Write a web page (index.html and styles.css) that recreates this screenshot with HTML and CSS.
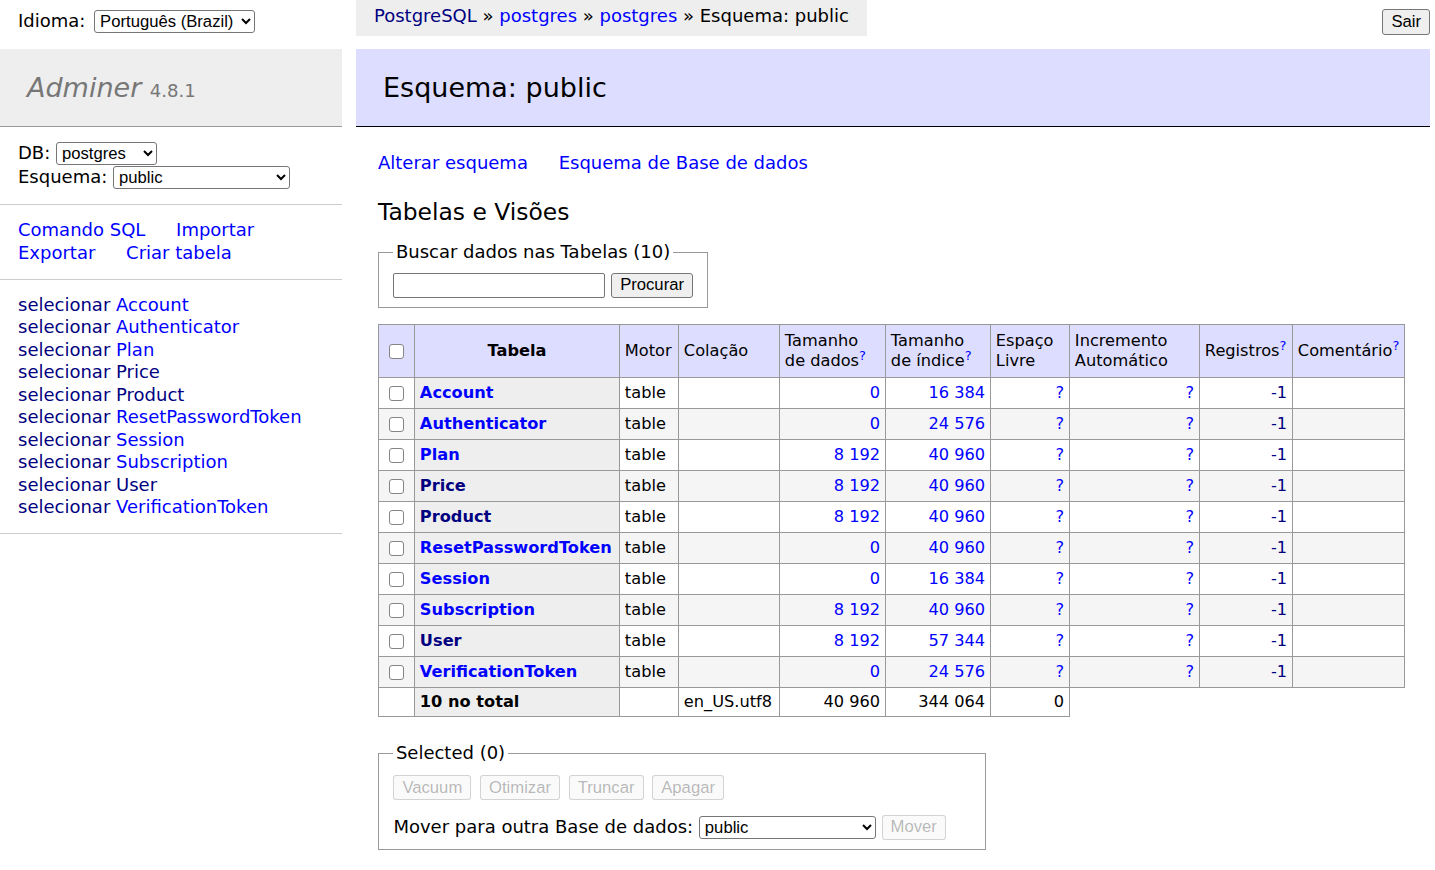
FILE: index.html
```html
<!DOCTYPE html>
<html lang="pt-BR">
<head>
<meta charset="utf-8">
<title>Esquema: public - Adminer</title>
<link rel="stylesheet" href="styles.css">
</head>
<body>
<div class="page">
  <header class="top">
    <form class="lang">Idioma: <select class="sel sel-lang"><option>Português (Brazil)</option></select></form>
    <nav class="breadcrumb"><a class="v" href="#">PostgreSQL</a> » <a href="#">postgres</a> » <a href="#">postgres</a> » Esquema: public</nav>
    <button class="btn logout" type="button">Sair</button>
  </header>
  <div class="main">
    <aside class="menu">
      <h1><a class="brand" href="#">Adminer</a> <span class="version">4.8.1</span></h1>
      <p class="dbs">DB: <select class="sel sel-db"><option>postgres</option></select><br>Esquema: <select class="sel sel-schema"><option>public</option></select></p>
      <p class="links side-links"><a href="#">Comando SQL</a> <a href="#">Importar</a> <a href="#">Exportar</a> <a href="#">Criar tabela</a></p>
      <ul class="tables">
        <li><a class="v" href="#">selecionar</a> <a href="#">Account</a></li>
        <li><a class="v" href="#">selecionar</a> <a href="#">Authenticator</a></li>
        <li><a class="v" href="#">selecionar</a> <a href="#">Plan</a></li>
        <li><a class="v" href="#">selecionar</a> <a class="v" href="#">Price</a></li>
        <li><a class="v" href="#">selecionar</a> <a class="v" href="#">Product</a></li>
        <li><a class="v" href="#">selecionar</a> <a href="#">ResetPasswordToken</a></li>
        <li><a class="v" href="#">selecionar</a> <a href="#">Session</a></li>
        <li><a class="v" href="#">selecionar</a> <a href="#">Subscription</a></li>
        <li><a class="v" href="#">selecionar</a> <a class="v" href="#">User</a></li>
        <li><a class="v" href="#">selecionar</a> <a href="#">VerificationToken</a></li>
      </ul>
    </aside>
    <main class="content">
      <h2>Esquema: public</h2>
      <p class="links"><a href="#">Alterar esquema</a> <a href="#">Esquema de Base de dados</a></p>
      <h3>Tabelas e Visões</h3>
      <form class="search-form">
        <fieldset class="fs">
          <legend>Buscar dados nas Tabelas (10)</legend>
          <div><input class="inp" type="search"> <button class="btn" type="button">Procurar</button></div>
        </fieldset>
        <table class="tbl">
          <colgroup>
            <col class="c1"><col class="c2"><col class="c3"><col class="c4"><col class="c5"><col class="c6"><col class="c7"><col class="c8"><col class="c9"><col class="c10">
          </colgroup>
          <thead>
            <tr>
              <td><input class="cb" type="checkbox"></td>
              <th>Tabela</th>
              <td>Motor</td>
              <td>Colação</td>
              <td>Tamanho<br>de dados<a href="#"><sup>?</sup></a></td>
              <td>Tamanho<br>de índice<a href="#"><sup>?</sup></a></td>
              <td>Espaço<br>Livre</td>
              <td>Incremento<br>Automático</td>
              <td>Registros<a href="#"><sup>?</sup></a></td>
              <td>Comentário<a href="#"><sup>?</sup></a></td>
            </tr>
          </thead>
          <tbody>
            <tr><td><input class="cb" type="checkbox"></td><th><a href="#">Account</a></th><td>table</td><td></td><td class="num"><a href="#">0</a></td><td class="num"><a href="#">16 384</a></td><td class="num"><a href="#">?</a></td><td class="num"><a href="#">?</a></td><td class="num"><a class="v" href="#">-1</a></td><td></td></tr>
            <tr><td><input class="cb" type="checkbox"></td><th><a href="#">Authenticator</a></th><td>table</td><td></td><td class="num"><a href="#">0</a></td><td class="num"><a href="#">24 576</a></td><td class="num"><a href="#">?</a></td><td class="num"><a href="#">?</a></td><td class="num"><a class="v" href="#">-1</a></td><td></td></tr>
            <tr><td><input class="cb" type="checkbox"></td><th><a href="#">Plan</a></th><td>table</td><td></td><td class="num"><a href="#">8 192</a></td><td class="num"><a href="#">40 960</a></td><td class="num"><a href="#">?</a></td><td class="num"><a href="#">?</a></td><td class="num"><a class="v" href="#">-1</a></td><td></td></tr>
            <tr><td><input class="cb" type="checkbox"></td><th><a class="v" href="#">Price</a></th><td>table</td><td></td><td class="num"><a href="#">8 192</a></td><td class="num"><a href="#">40 960</a></td><td class="num"><a href="#">?</a></td><td class="num"><a href="#">?</a></td><td class="num"><a class="v" href="#">-1</a></td><td></td></tr>
            <tr><td><input class="cb" type="checkbox"></td><th><a class="v" href="#">Product</a></th><td>table</td><td></td><td class="num"><a href="#">8 192</a></td><td class="num"><a href="#">40 960</a></td><td class="num"><a href="#">?</a></td><td class="num"><a href="#">?</a></td><td class="num"><a class="v" href="#">-1</a></td><td></td></tr>
            <tr><td><input class="cb" type="checkbox"></td><th><a href="#">ResetPasswordToken</a></th><td>table</td><td></td><td class="num"><a href="#">0</a></td><td class="num"><a href="#">40 960</a></td><td class="num"><a href="#">?</a></td><td class="num"><a href="#">?</a></td><td class="num"><a class="v" href="#">-1</a></td><td></td></tr>
            <tr><td><input class="cb" type="checkbox"></td><th><a href="#">Session</a></th><td>table</td><td></td><td class="num"><a href="#">0</a></td><td class="num"><a href="#">16 384</a></td><td class="num"><a href="#">?</a></td><td class="num"><a href="#">?</a></td><td class="num"><a class="v" href="#">-1</a></td><td></td></tr>
            <tr><td><input class="cb" type="checkbox"></td><th><a href="#">Subscription</a></th><td>table</td><td></td><td class="num"><a href="#">8 192</a></td><td class="num"><a href="#">40 960</a></td><td class="num"><a href="#">?</a></td><td class="num"><a href="#">?</a></td><td class="num"><a class="v" href="#">-1</a></td><td></td></tr>
            <tr><td><input class="cb" type="checkbox"></td><th><a class="v" href="#">User</a></th><td>table</td><td></td><td class="num"><a href="#">8 192</a></td><td class="num"><a href="#">57 344</a></td><td class="num"><a href="#">?</a></td><td class="num"><a href="#">?</a></td><td class="num"><a class="v" href="#">-1</a></td><td></td></tr>
            <tr><td><input class="cb" type="checkbox"></td><th><a href="#">VerificationToken</a></th><td>table</td><td></td><td class="num"><a href="#">0</a></td><td class="num"><a href="#">24 576</a></td><td class="num"><a href="#">?</a></td><td class="num"><a href="#">?</a></td><td class="num"><a class="v" href="#">-1</a></td><td></td></tr>
            <tr class="total"><td></td><th>10 no total</th><td></td><td>en_US.utf8</td><td class="num">40 960</td><td class="num">344 064</td><td class="num">0</td></tr>
          </tbody>
        </table>
        <div class="footer">
          <fieldset class="fs">
            <legend>Selected (0)</legend>
            <div class="actions"><button class="btn" type="button" disabled>Vacuum</button> <button class="btn" type="button" disabled>Otimizar</button> <button class="btn" type="button" disabled>Truncar</button> <button class="btn" type="button" disabled>Apagar</button></div>
            <p class="move">Mover para outra Base de dados: <select class="sel sel-target"><option>public</option></select> <button class="btn" type="button" disabled>Mover</button></p>
          </fieldset>
        </div>
      </form>
    </main>
  </div>
</div>
</body>
</html>
```

FILE: styles.css
```css
body {
  margin: 0;
  color: #000;
  background: #fff;
  font: 18px/1.25 "DejaVu Sans", Verdana, sans-serif;
}
a { color: blue; text-decoration: none; }
a.v { color: navy; }

.page { width: 1430px; }

/* top bar */
.top {
  display: flex;
  align-items: flex-start;
  height: 49px;
}
.lang {
  width: 356px;
  padding: 5.4px 18px;
  line-height: 32.4px;
  white-space: nowrap;
  box-sizing: border-box;
}
.lang .sel { margin-left: 3px; }
.breadcrumb {
  height: 36px;
  line-height: 32.4px;
  padding: 0 18px;
  background: #eee;
  white-space: nowrap;
}
.logout { margin-left: auto; margin-top: 9px; }

/* form controls */
select, input, button { font: 16.67px "Liberation Sans", Arial, sans-serif; }
.sel {
  height: 23px;
  border: 1px solid #767676;
  border-radius: 3px;
  background: #fff;
  color: #000;
  padding: 0 1px;
  box-sizing: border-box;
  vertical-align: baseline;
}
.sel-lang { width: 161px; }
.sel-db { width: 101px; }
.sel-schema { width: 177px; }
.sel-target { width: 177px; }
.btn {
  height: 26px;
  padding: 0 8px;
  border: 1px solid #767676;
  border-radius: 3px;
  background: #efefef;
  color: #000;
  box-sizing: border-box;
}
.btn:disabled {
  color: rgba(16, 16, 16, .3);
  background: rgba(239, 239, 239, .3);
  border-color: rgba(118, 118, 118, .3);
}
.inp {
  width: 212px;
  height: 25px;
  border: 1px solid #767676;
  border-radius: 2px;
  box-sizing: border-box;
  vertical-align: middle;
}
.fs .btn { vertical-align: middle; height: 25px; }
.cb {
  appearance: none;
  -webkit-appearance: none;
  width: 15px;
  height: 15px;
  margin: 0 0 0 5px;
  border: 1px solid #858585;
  border-radius: 3px;
  background: #fff;
  vertical-align: middle;
}

/* layout */
.main {
  display: grid;
  grid-template-columns: 342px 1fr;
  column-gap: 36px;
  align-items: start;
}

/* sidebar */
.menu h1 {
  margin: 0;
  font-size: 27px;
  line-height: 1.25;
  padding: 21.6px 27px;
  border-bottom: 1px solid #999;
  font-weight: normal;
  color: #777;
  background: #eee;
}
.brand { color: #777; font-style: italic; }
.version { color: #777; font-size: 18.1px; }
.menu p, .tables {
  padding: 14.4px 18px;
  margin: 0;
  border-bottom: 1px solid #ccc;
}
.dbs { line-height: 24px; }
.side-links { line-height: 22.5px; }
.tables { list-style: none; white-space: nowrap; }
.links a { white-space: nowrap; margin-right: 25px; }

/* content */
.content h2 {
  font-size: 27px;
  line-height: 1.25;
  margin: 0 0 25px -22px;
  padding: 21.6px 27px;
  border-bottom: 1px solid #000;
  color: #000;
  font-weight: normal;
  background: #ddf;
}
.content p.links { margin: 0; }
.content h3 {
  font-weight: normal;
  font-size: 23.4px;
  line-height: 1.25;
  margin: 23.4px 0 0;
}
.search-form { margin: 0; }
.fs {
  display: inline-block;
  vertical-align: top;
  padding: 9px 14.4px;
  margin: 14.4px 9px 0 0;
  border: 1px solid #999;
}
.fs legend { padding: 0 2.5px; }

/* table */
.tbl {
  margin: 16.2px 25px 0 0;
  border-collapse: collapse;
  font-size: 16.2px;
  line-height: 1.25;
  table-layout: fixed;
  width: 1026px;
}
.tbl td, .tbl th {
  border: 1px solid #999;
  padding: 3.24px 4.86px;
  white-space: nowrap;
}
.tbl th { background: #eee; text-align: left; }
.tbl thead td, .tbl thead th { background: #ddf; white-space: normal; }
.tbl thead th { text-align: center; padding: 3.24px 8.1px; }
.tbl thead tr { height: 53px; }
.tbl tbody tr { height: 31px; }
.tbl tbody tr.total { height: 29px; }
.tbl tbody tr:nth-child(2n) td { background: #f5f5f5; }
.tbl sup { font-size: 13px; line-height: 0; }
.num { text-align: right; }
.c1 { width: 36px; }
.c2 { width: 205px; }
.c3 { width: 59px; }
.c4 { width: 101px; }
.c5 { width: 106px; }
.c6 { width: 105px; }
.c7 { width: 79px; }
.c8 { width: 130px; }
.c9 { width: 93px; }
.c10 { width: 112px; }

/* footer actions */
.footer { margin-top: 25px; }
.footer .fs { margin-top: 0; }
.actions { line-height: 25px; }
.actions .btn { margin-right: 3px; }
.move { margin: 14.4px 25px 0 0; }
.move .btn { vertical-align: middle; }
.move .sel { vertical-align: middle; }
```
